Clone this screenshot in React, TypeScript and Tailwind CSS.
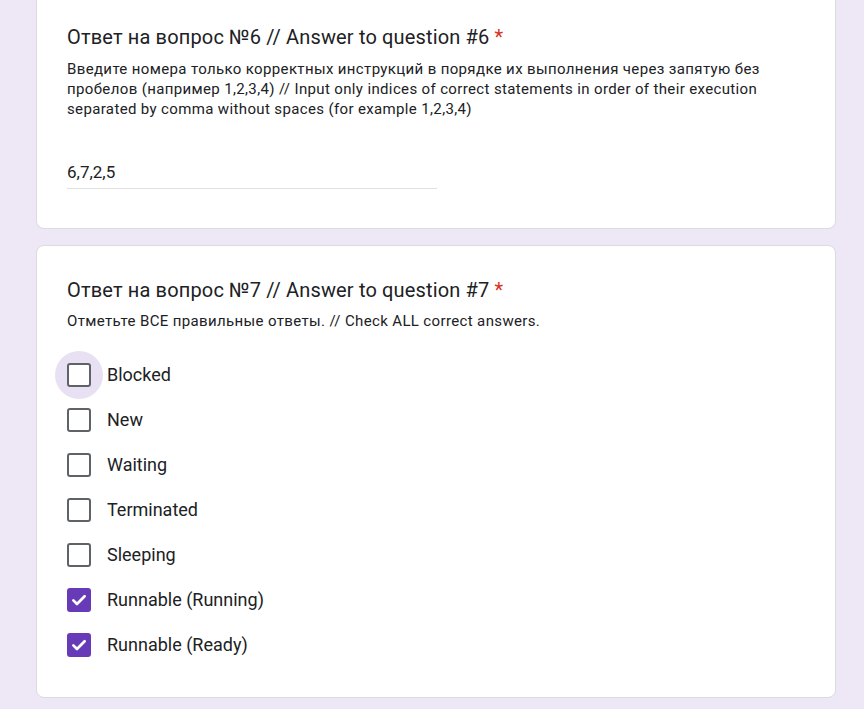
const options = [
  { label: "Blocked", checked: false, hover: true },
  { label: "New", checked: false },
  { label: "Waiting", checked: false },
  { label: "Terminated", checked: false },
  { label: "Sleeping", checked: false },
  { label: "Runnable (Running)", checked: true },
  { label: "Runnable (Ready)", checked: true },
];

function Checkbox({ checked, hover }: { checked: boolean; hover?: boolean }) {
  return (
    <div className="relative flex h-[24px] w-[24px] shrink-0 items-center justify-center">
      {hover && (
        <div className="absolute left-1/2 top-1/2 h-[48px] w-[48px] -translate-x-1/2 -translate-y-1/2 rounded-full bg-[#e8e1f4]" />
      )}
      {checked ? (
        <div className="relative flex h-[24px] w-[24px] items-center justify-center rounded-[3px] bg-[#673ab7]">
          <svg width="18" height="18" viewBox="0 0 24 24" fill="none">
            <path d="M4.5 12.5l4.8 4.8L19.5 7" stroke="white" strokeWidth="3.6" strokeLinecap="round" strokeLinejoin="round" />
          </svg>
        </div>
      ) : (
        <div className="relative h-[24px] w-[24px] rounded-[3px] border-[2.5px] border-[#5f6368] bg-white" />
      )}
    </div>
  );
}

export default function App() {
  return (
    <main className="min-h-[709px] bg-[#ede7f6] font-['Roboto',sans-serif] text-[#202124]">
      <div className="ml-[36px] flex w-[800px] flex-col gap-[16px] pb-[12px]">
        {/* QUESTION 6 */}
        <section className="rounded-b-lg border border-t-0 border-[#dadce0] bg-white pl-[30px] pr-[30px] pt-[25px] pb-[39px]">
          <h2 className="text-[20px] leading-[24px] tracking-[0.15px]">
            Ответ на вопрос №6 // Answer to question #6 <span className="text-[#d93025]">*</span>
          </h2>
          <p className="mt-[10px] text-[15px] leading-[20px] tracking-[0.36px]">
            Введите номера только корректных инструкций в порядке их выполнения через запятую без
            пробелов (например 1,2,3,4) // Input only indices of correct statements in order of their execution
            separated by comma without spaces (for example 1,2,3,4)
          </p>
          <div className="mt-[41px] w-[370px] border-b border-[#e0e0e0] pb-[4px] text-[17px] leading-[24px]">
            6,7,2,5
          </div>
        </section>

        {/* QUESTION 7 */}
        <section className="rounded-lg border border-[#dadce0] bg-white pl-[30px] pr-[30px] pt-[32px] pb-[30px]">
          <h2 className="text-[20px] leading-[24px] tracking-[0.15px]">
            Ответ на вопрос №7 // Answer to question #7 <span className="text-[#d93025]">*</span>
          </h2>
          <p className="mt-[9px] text-[15px] leading-[20px] tracking-[0.36px]">
            Отметьте ВСЕ правильные ответы. // Check ALL correct answers.
          </p>
          <div className="mt-[21px] flex flex-col">
            {options.map((o) => (
              <label key={o.label} className="flex h-[45px] items-center gap-[16px]">
                <Checkbox checked={o.checked} hover={o.hover} />
                <span className="text-[18px] leading-[24px]">{o.label}</span>
              </label>
            ))}
          </div>
        </section>
      </div>
    </main>
  );
}
